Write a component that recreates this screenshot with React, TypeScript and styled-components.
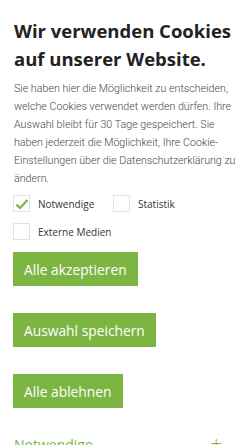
import React, { useState } from "react";
import styled, { createGlobalStyle } from "styled-components";

const Global = createGlobalStyle`
  html, body {
    margin: 0;
    padding: 0;
    background: #fff;
  }
  * {
    box-sizing: border-box;
  }
`;

const Banner = styled.section`
  width: 250px;
  padding: 17px 10px 0 14px;
  background: #fff;
  overflow: hidden;
  height: 445px;
`;

const Title = styled.h2`
  margin: 0;
  font-family: "Open Sans", sans-serif;
  font-weight: 700;
  font-size: 18.5px;
  line-height: 28px;
  color: #222;
`;

const Intro = styled.p`
  margin: 7px 0 0;
  font-family: Roboto, sans-serif;
  font-weight: 300;
  font-size: 10.7px;
  line-height: 18px;
  color: #484848;
`;

const Options = styled.div`
  margin-top: 7px;
  display: grid;
  grid-template-columns: 100px auto;
  row-gap: 11px;
  margin-left: -1px;
`;

const Option = styled.label`
  display: flex;
  align-items: center;
  gap: 8px;
  white-space: nowrap;
  font-family: "Open Sans", sans-serif;
  font-size: 10px;
  color: #333;
  cursor: pointer;
`;

const Box = styled.span`
  flex: none;
  width: 17px;
  height: 17px;
  border: 1px solid #e2e2e2;
  display: flex;
  align-items: center;
  justify-content: center;
  background: #fff;
`;

const Actions = styled.div`
  display: flex;
  flex-direction: column;
  align-items: flex-start;
  gap: 27px;
  margin-top: 12px;
  margin-left: -1px;
`;

const Button = styled.button`
  height: 34px;
  padding: 0 11px;
  border: none;
  background: #7db543;
  color: #fff;
  font-family: "Open Sans", sans-serif;
  font-size: 13.8px;
  cursor: pointer;
`;

const Category = styled.div`
  margin-top: 26px;
  display: flex;
  justify-content: space-between;
  align-items: center;
  color: #7db543;
  font-family: "Open Sans", sans-serif;
  font-size: 14px;
  padding-right: 18px;
`;

const Plus = styled.span`
  font-size: 20px;
  font-weight: 300;
  line-height: 1;
`;

const Check = () => (
  <svg width="14" height="12" viewBox="0 0 14 12">
    <path d="M1.5 6.5 L5 10 L12.5 2" fill="none" stroke="#7db543" strokeWidth="2.2" />
  </svg>
);

export default function App() {
  const [stats, setStats] = useState(false);
  const [media, setMedia] = useState(false);
  return (
    <>
      <Global />
      <Banner>
        <Title>Wir verwenden Cookies auf unserer Website.</Title>
        <Intro>
          Sie haben hier die Möglichkeit zu entscheiden, welche Cookies
          verwendet werden dürfen. Ihre Auswahl bleibt für 30 Tage gespeichert.
          Sie haben jederzeit die Möglichkeit, Ihre Cookie-Einstellungen über
          die Datenschutzerklärung zu ändern.
        </Intro>
        <Options>
          <Option>
            <Box>
              <Check />
            </Box>
            Notwendige
          </Option>
          <Option onClick={() => setStats(!stats)}>
            <Box>{stats && <Check />}</Box>
            Statistik
          </Option>
          <Option onClick={() => setMedia(!media)}>
            <Box>{media && <Check />}</Box>
            Externe Medien
          </Option>
        </Options>
        <Actions>
          <Button>Alle akzeptieren</Button>
          <Button>Auswahl speichern</Button>
          <Button>Alle ablehnen</Button>
        </Actions>
        <Category>
          Notwendige
          <Plus>+</Plus>
        </Category>
      </Banner>
    </>
  );
}
